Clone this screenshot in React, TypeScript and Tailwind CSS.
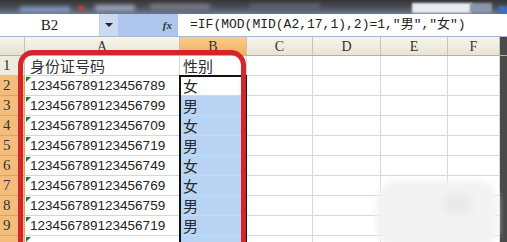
import React from "react";

const rows = [
  { n: 1, a: "身份证号码", b: "性别", head: true },
  { n: 2, a: "123456789123456789", b: "女" },
  { n: 3, a: "123456789123456799", b: "男" },
  { n: 4, a: "123456789123456709", b: "女" },
  { n: 5, a: "123456789123456719", b: "男" },
  { n: 6, a: "123456789123456749", b: "女" },
  { n: 7, a: "123456789123456769", b: "女" },
  { n: 8, a: "123456789123456759", b: "男" },
  { n: 9, a: "123456789123456719", b: "男" },
  { n: 10, a: "", b: "" },
];

const serif = { fontFamily: '"Liberation Serif", "Noto Sans CJK SC", serif' };
const mono = { fontFamily: '"Liberation Mono", "Noto Sans CJK SC", monospace' };
const sans = { fontFamily: '"Liberation Sans", Arial, sans-serif' };
const cjk = { fontFamily: '"Noto Sans CJK SC", "Liberation Sans", sans-serif' };

export default function App() {
  return (
    <div className="relative w-[507px] h-[242px] overflow-hidden bg-white flex flex-col">
      {/* blurred toolbar strip */}
      <div className="relative h-[14px] shrink-0 bg-gradient-to-b from-[#353535] via-[#4a4d55] to-[#6d7a93] overflow-hidden">
        <div className="absolute left-[20px] top-[7px] w-[50px] h-[5px] bg-[#8aa0c8] blur-[2px]" />
        <div className="absolute left-[78px] top-[6px] w-[6px] h-[5px] bg-[#c04040] blur-[1px]" />
        <div className="absolute left-[95px] top-[5px] w-[40px] h-[6px] bg-[#9aa6b8] blur-[2px]" />
        <div className="absolute left-[150px] top-[4px] w-[60px] h-[6px] bg-[#767b86] blur-[2px]" />
        <div className="absolute left-[250px] top-[4px] w-[70px] h-[6px] bg-[#5e6470] blur-[2px]" />
        <div className="absolute left-[412px] top-[3px] w-[60px] h-[10px] bg-[#e8ebf0] blur-[1px]" />
        <div className="absolute left-[470px] top-[3px] w-[22px] h-[10px] bg-[#8a96aa] blur-[1px]" />
        <div className="absolute left-[499px] top-[6px] w-[8px] h-[8px] bg-[#3d6fc4] blur-[1px]" />
      </div>

      {/* formula bar */}
      <div className="flex h-[23px] shrink-0 border-b border-[#a9b8cf] bg-white">
        <div className="w-[100px] flex items-center justify-center text-[15px] text-[#222] border-r border-[#c4cfe0]" style={serif}>
          B2
        </div>
        <div className="w-[18px] flex items-center justify-center bg-[#c9daf2]">
          <div className="w-0 h-0 border-l-[4px] border-r-[4px] border-t-[4px] border-l-transparent border-r-transparent border-t-[#222]" />
        </div>
        <div className="w-[60px] flex items-center justify-end pr-[6px] bg-[#aec6ec]">
          <span className="italic text-[11px] font-bold text-[#333]" style={serif}>fx</span>
        </div>
        <div className="flex-1 flex items-center pl-[12px] text-[13px] text-[#222] whitespace-nowrap" style={mono}>
          =IF(MOD(MID(A2,17,1),2)=1,"男","女")
        </div>
      </div>

      {/* column headers */}
      <div className="flex h-[19px] shrink-0 border-b border-[#b8b3a0]">
        <div className="w-[25px] border-r border-[#c8c4b4] bg-gradient-to-b from-[#f7f5ee] to-[#e6e2d2]" />
        {[
          { l: "A", w: "w-[155px]", on: false },
          { l: "B", w: "w-[67px]", on: true },
          { l: "C", w: "w-[66px]", on: false },
          { l: "D", w: "w-[68px]", on: false },
          { l: "E", w: "w-[67px]", on: false },
          { l: "F", w: "w-[52px]", on: false },
        ].map((c) => (
          <div
            key={c.l}
            className={`${c.w} flex items-center justify-center text-[14px] text-[#333] border-r border-[#c8c4b4] ${
              c.on ? "bg-gradient-to-b from-[#f9cd8e] to-[#f2ae5c]" : "bg-gradient-to-b from-[#f7f5ee] to-[#e8e4d4]"
            }`}
            style={serif}
          >
            {c.l}
          </div>
        ))}
        <div className="flex-1 bg-[#4a4a4a]" />
      </div>

      {/* rows */}
      {rows.map((r) => (
        <div key={r.n} className="flex h-[20px] shrink-0">
          <div
            className={`w-[25px] flex items-center justify-start pl-[3px] text-[15px] text-[#333] border-r border-b ${
              r.head ? "bg-[#eeebdf] border-[#c8c4b4]" : "bg-[#f5bd7b] border-[#d9a564]"
            }`}
            style={serif}
          >
            {r.n === 10 ? "" : r.n}
          </div>
          <div className="relative w-[155px] flex items-center pl-[5px] border-r border-b border-[#d6d6d6] text-[#222]">
            {!r.head && (
              <div className="absolute left-[1px] top-[1px] w-0 h-0 border-t-[5px] border-r-[5px] border-t-[#1e7a2e] border-r-transparent" />
            )}
            {r.head ? (
              <span className="text-[15px] leading-none text-[#333]" style={cjk}>{r.a}</span>
            ) : (
              <span className="text-[13.5px] leading-none" style={sans}>{r.a}</span>
            )}
          </div>
          <div
            className={`w-[67px] flex items-center pl-[3px] border-r border-b border-[#d6d6d6] text-[15px] leading-none text-[#2a2a2a] ${
              r.head || r.n === 2 ? "bg-white" : "bg-[#b9d3f3]"
            }`}
            style={cjk}
          >
            {r.b}
          </div>
          <div className="w-[66px] border-r border-b border-[#d6d6d6]" />
          <div className="w-[68px] border-r border-b border-[#d6d6d6]" />
          <div className="w-[67px] border-r border-b border-[#d6d6d6]" />
          <div className="w-[52px] border-r border-b border-[#d6d6d6]" />
          <div className="flex-1 bg-[#4a4a4a]" />
        </div>
      ))}

      {/* active selection border */}
      <div className="absolute left-[179px] top-[75px] w-[68px] h-[200px] border-2 border-[#111]" />

      {/* red annotation */}
      <div className="absolute left-[18px] top-[50px] w-[228px] h-[240px] border-[5px] border-[#d4252d] rounded-[15px]" />

      {/* blurred watermark patch */}
      <div className="absolute left-[376px] top-[180px] w-[122px] h-[70px] rounded-[22px] bg-[#f3f3f3] blur-[3px]" />
      <div className="absolute left-[445px] top-[195px] w-[25px] h-[18px] bg-[#e9e9e9] blur-[3px]" />
    </div>
  );
}
